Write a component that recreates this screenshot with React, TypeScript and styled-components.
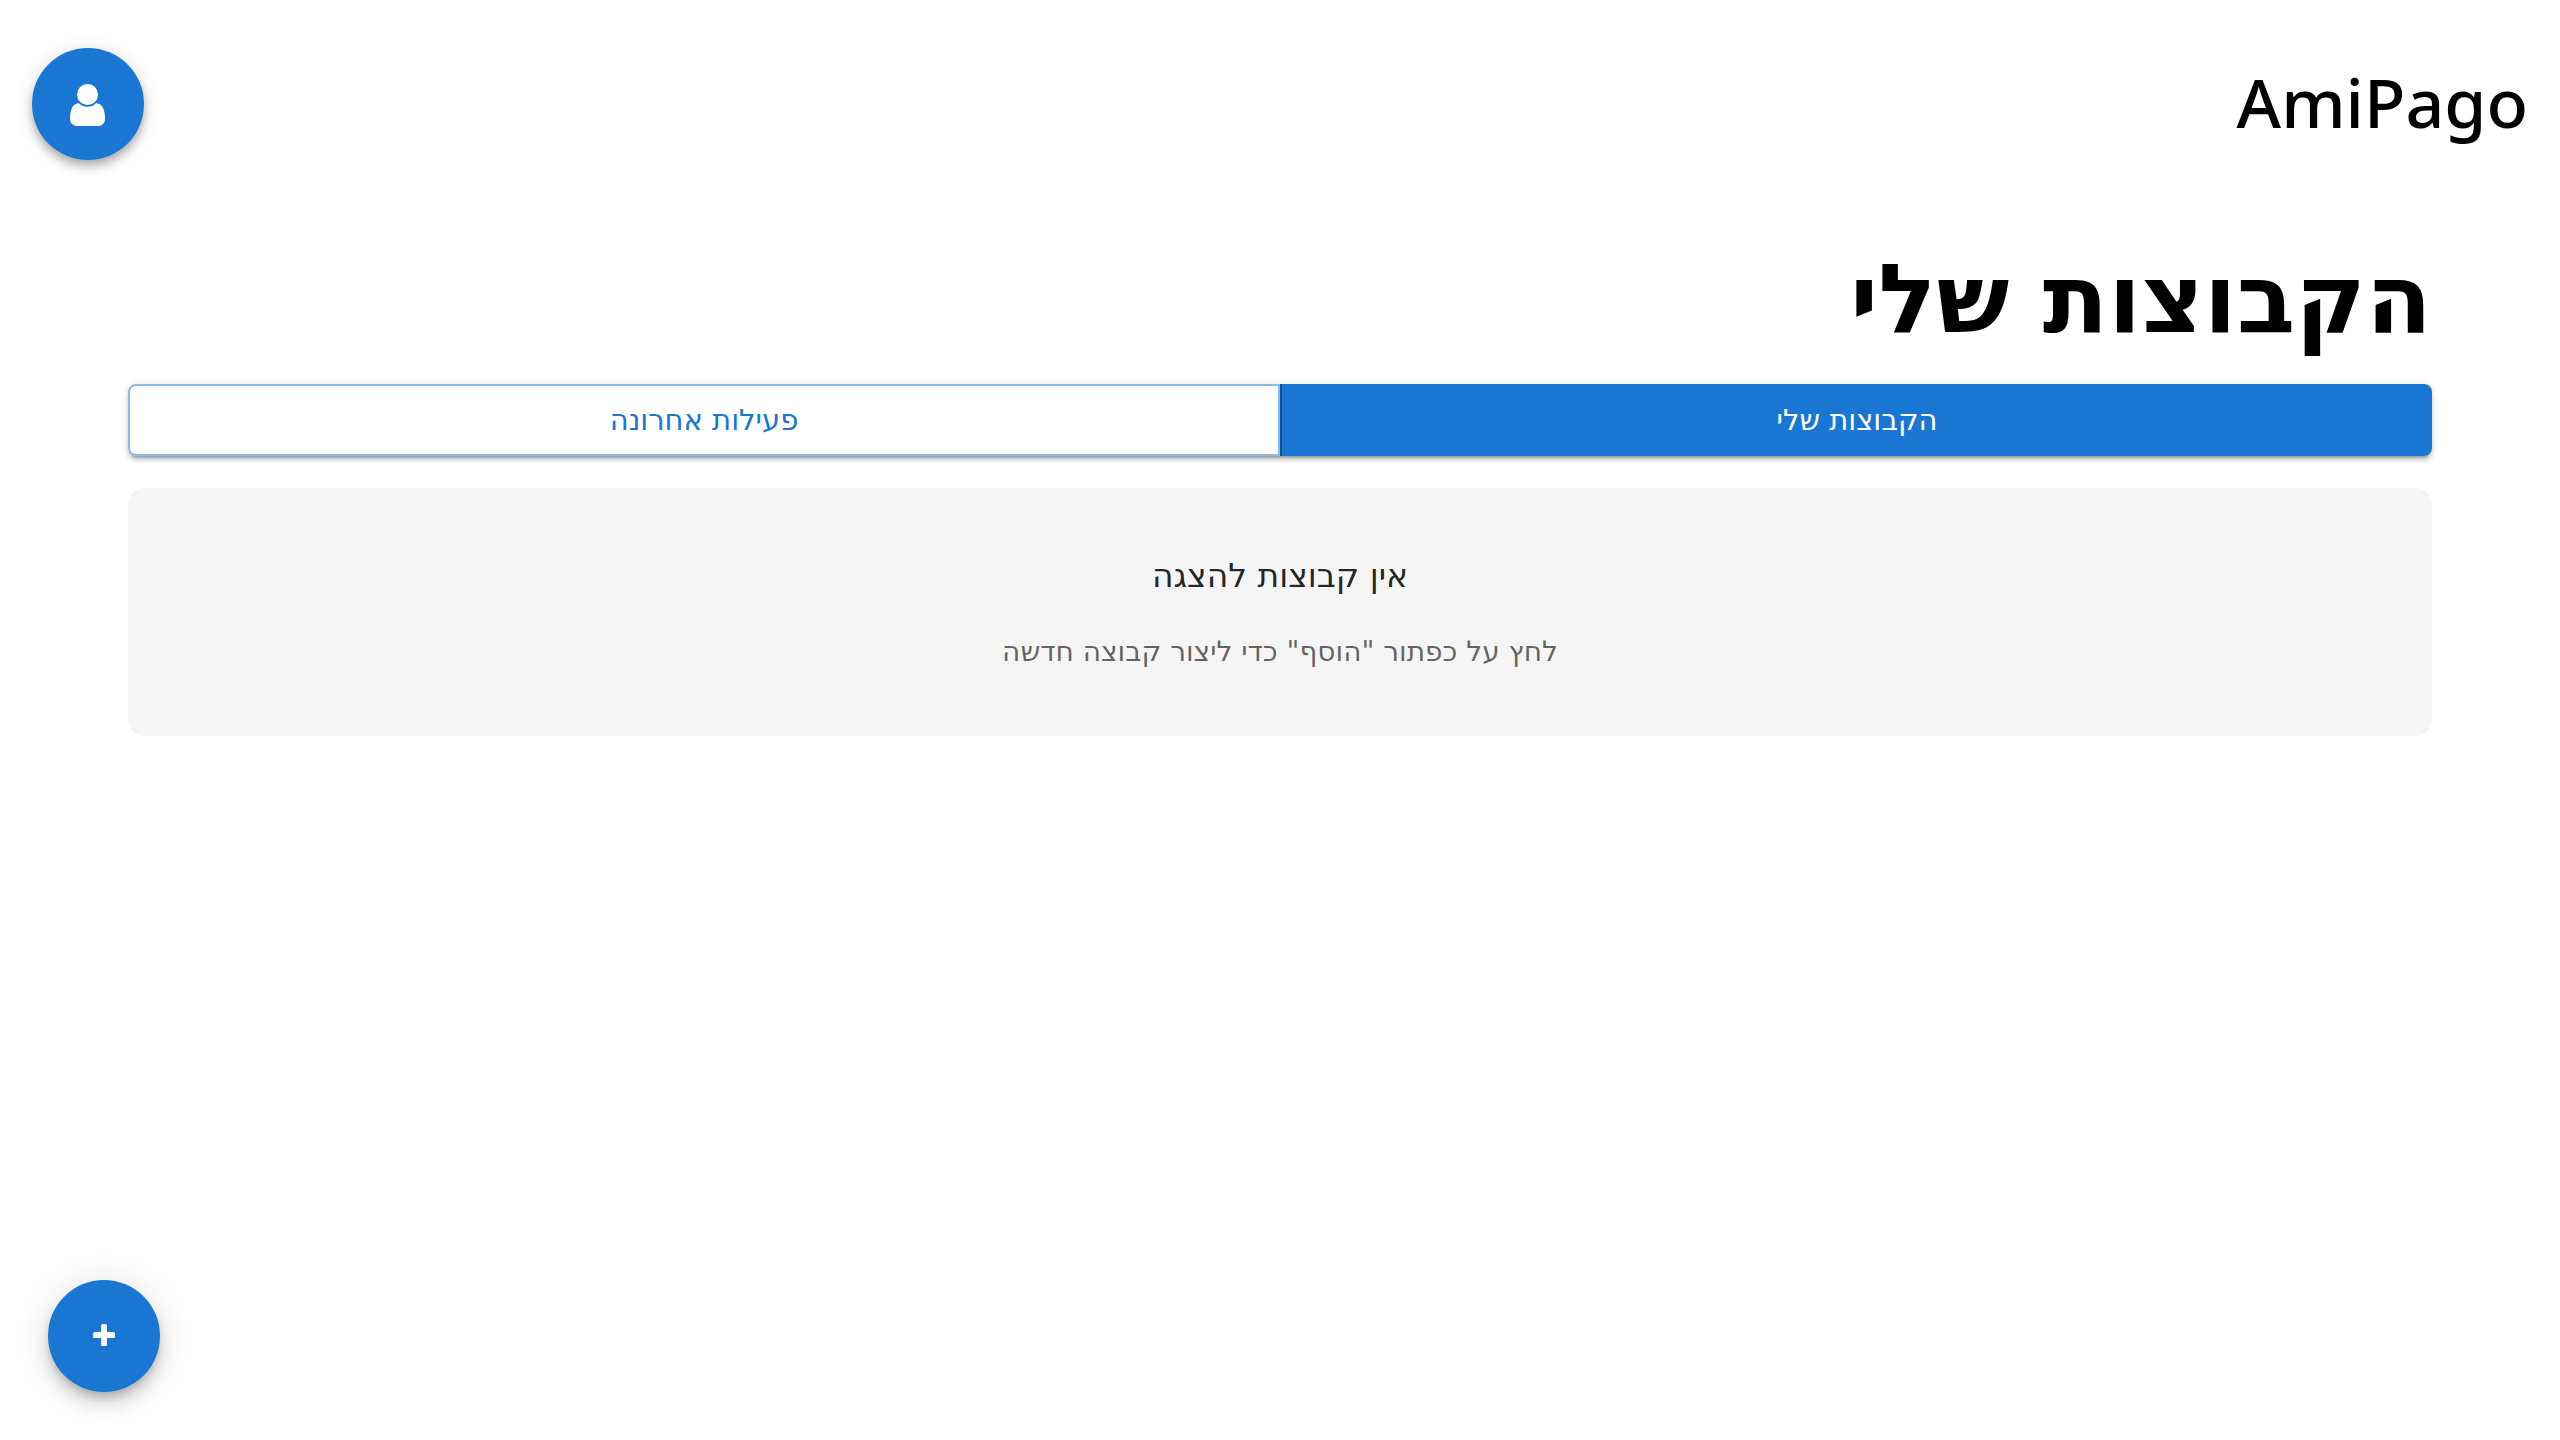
import React, { useState } from "react";
import styled, { createGlobalStyle, css } from "styled-components";

const primary = "#1976d2";
const primaryDark = "#115293";

const GlobalStyle = createGlobalStyle`
  *, *::before, *::after {
    box-sizing: border-box;
  }
  body {
    margin: 0;
    background: #fff;
    color: #000;
    font-family: "DejaVu Sans", sans-serif;
  }
  button {
    font: inherit;
    cursor: pointer;
  }
`;

const Page = styled.div`
  min-height: 100vh;
`;

const Header = styled.header`
  display: flex;
  align-items: center;
  justify-content: space-between;
  padding: 48px 32px;
`;

const Brand = styled.span`
  padding-bottom: 4px;
  font-family: "Noto Sans", sans-serif;
  font-size: 68px;
  font-weight: 500;
  line-height: 80px;
`;

const RoundButton = styled.button<{ $floating?: boolean }>`
  display: flex;
  align-items: center;
  justify-content: center;
  width: 112px;
  height: 112px;
  padding: 0;
  border: 0;
  border-radius: 50%;
  background: ${primary};
  color: #fff;
  box-shadow:
    0 4px 8px -2px rgba(0, 0, 0, 0.2),
    0 8px 10px 0 rgba(0, 0, 0, 0.14),
    0 2px 20px 0 rgba(0, 0, 0, 0.12);

  ${(p) =>
    p.$floating &&
    css`
      position: fixed;
      bottom: 48px;
      left: 48px;
      box-shadow:
        0 6px 10px -2px rgba(0, 0, 0, 0.2),
        0 12px 20px 0 rgba(0, 0, 0, 0.14),
        0 2px 36px 0 rgba(0, 0, 0, 0.12);
    `}
`;

const Main = styled.main`
  display: flex;
  flex-direction: column;
  gap: 32px;
  padding: 40px 128px;
`;

const Title = styled.h1`
  margin: 0;
  font-size: 96px;
  font-weight: 700;
  line-height: 104px;
`;

const TabGroup = styled.div`
  display: grid;
  grid-template-columns: 1fr 1fr;
  border-radius: 8px;
  box-shadow:
    0 6px 2px -4px rgba(0, 0, 0, 0.2),
    0 4px 4px 0 rgba(0, 0, 0, 0.14),
    0 2px 10px 0 rgba(0, 0, 0, 0.12);
`;

const Tab = styled.button<{ $selected: boolean }>`
  height: 72px;
  padding: 0;
  border: 2px solid rgba(25, 118, 210, 0.5);
  background: #fff;
  color: ${primary};
  font-size: 29px;
  line-height: 44px;

  &:first-child {
    border-start-start-radius: 8px;
    border-end-start-radius: 8px;
  }
  &:last-child {
    border-start-end-radius: 8px;
    border-end-end-radius: 8px;
  }

  ${(p) =>
    p.$selected &&
    css`
      border-width: 0;
      border-inline-end: 2px solid ${primaryDark};
      background: ${primary};
      color: #fff;
    `}
`;

const EmptyPanel = styled.section`
  display: flex;
  flex-direction: column;
  align-items: center;
  gap: 32px;
  padding: 66px 64px 62px;
  border-radius: 16px;
  background: #f5f5f5;
  line-height: 44px;
  text-align: center;
`;

const EmptyTitle = styled.h2`
  margin: 0;
  color: rgba(0, 0, 0, 0.87);
  font-size: 33px;
  font-weight: 400;
`;

const EmptyHint = styled.p`
  margin: 0;
  color: rgba(0, 0, 0, 0.6);
  font-size: 28px;
`;

const UserIcon = () => (
  <svg width="36" height="44" viewBox="0 55 1317 1609" fill="currentColor" aria-hidden="true">
    <path d="M1280 1399q0 109-62.5 187t-150.5 78h-854q-88 0-150.5-78t-62.5-187q0-85 8.5-160.500t31.500-152t58.500-131t94-89t134.500-34.500q131 128 313 128t313-128q76 0 134.500 34.500t94 89t58.500 131t31.500 152t8.500 160.500zM1024 512q0 159-112.500 271.500t-271.500 112.500t-271.500-112.500t-112.500-271.500t112.500-271.500t271.500-112.500t271.500 112.500t112.500 271.500z" />
  </svg>
);

const PlusIcon = () => (
  <svg width="22" height="24" viewBox="0 0 22 24" fill="currentColor" aria-hidden="true">
    <rect x="8" y="0" width="6" height="22" rx="1.600" />
    <rect x="0" y="8" width="22" height="6" rx="1.600" />
  </svg>
);

const tabs = ["הקבוצות שלי", "פעילות אחרונה"];

export default function App() {
  const [selected, setSelected] = useState(0);

  return (
    <Page dir="rtl" lang="he">
      <GlobalStyle />
      <Header>
        <Brand>AmiPago</Brand>
        <RoundButton type="button" aria-label="חשבון">
          <UserIcon />
        </RoundButton>
      </Header>
      <Main>
        <Title>הקבוצות שלי</Title>
        <TabGroup role="group">
          {tabs.map((label, index) => (
            <Tab
              key={label}
              type="button"
              aria-pressed={index === selected}
              $selected={index === selected}
              onClick={() => setSelected(index)}
            >
              {label}
            </Tab>
          ))}
        </TabGroup>
        <EmptyPanel>
          <EmptyTitle>אין קבוצות להצגה</EmptyTitle>
          <EmptyHint>לחץ על כפתור "הוסף" כדי ליצור קבוצה חדשה</EmptyHint>
        </EmptyPanel>
      </Main>
      <RoundButton type="button" aria-label="הוסף" $floating>
        <PlusIcon />
      </RoundButton>
    </Page>
  );
}
